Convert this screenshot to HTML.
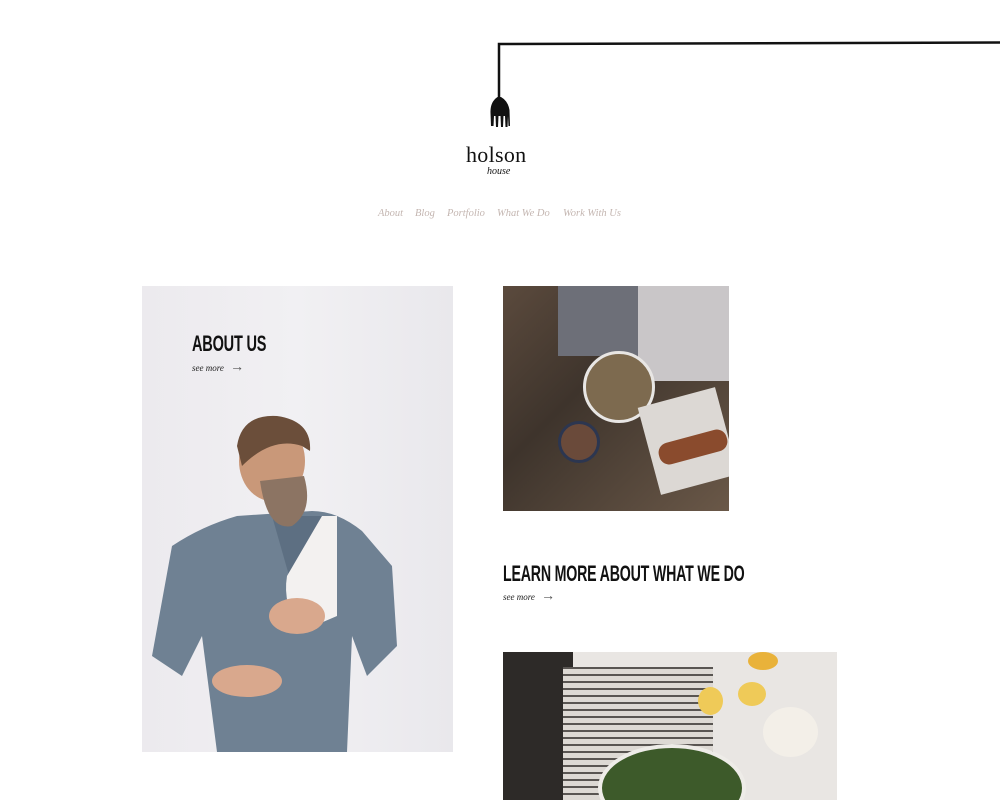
<!DOCTYPE html>
<html><head><style>
body{margin:0;width:1000px;height:800px;background:#fff;overflow:hidden;position:relative;font-family:"Liberation Serif",serif}
.a{position:absolute}
.h{font-family:"Liberation Sans",sans-serif;font-weight:bold;color:#111;font-size:22px;letter-spacing:-0.3px;white-space:nowrap;transform-origin:left top;transform:scaleX(0.66)}
.sm{font-style:italic;font-size:9px;color:#222}
.nav{font-style:italic;font-size:10.5px;color:#c4b6b1}
</style></head><body>
<svg class="a" style="left:0;top:0" width="1000" height="140">
<path d="M499 100 L499 44 L1000 42.5" stroke="#111" stroke-width="2.5" fill="none"/>
<path d="M497.5 97 Q490 102 490.5 113 L491 126 L493.5 126 L494 116 L495.5 116 L496 127 L498 127 L498.5 116 L500.5 116 L501 127 L503 127 L503.5 116 L505 116 L505.5 127 L507.5 127 L508 116 L508.5 126 L510 126 L509.5 110 Q508 101 501 97 Z" fill="#111"/>
</svg>
<div class="a" style="left:466px;top:142px;font-size:22px;color:#111;letter-spacing:0.3px">holson</div>
<div class="a" style="left:487px;top:166px;font-size:10px;font-style:italic;color:#111">house</div>
<div class="a nav" style="left:378px;top:208px">About</div>
<div class="a nav" style="left:415px;top:208px">Blog</div>
<div class="a nav" style="left:447px;top:208px">Portfolio</div>
<div class="a nav" style="left:497px;top:208px">What We Do</div>
<div class="a nav" style="left:563px;top:208px">Work With Us</div>

<div class="a" style="left:142px;top:286px;width:311px;height:466px;background:linear-gradient(90deg,#eceaee,#f1f0f3 50%,#e9e8ec);overflow:hidden">
 <svg width="311" height="466">
  <path d="M95 230 Q60 240 30 260 L10 370 L40 390 L60 350 L75 466 L205 466 L210 350 L225 390 L255 360 L250 280 L220 245 Q195 225 170 225 Z" fill="#6f8193"/>
  <path d="M130 230 L150 300 L180 230 Z" fill="#5d6f82"/>
  <path d="M145 290 Q140 320 160 345 L195 330 L195 230 L180 230 Z" fill="#f3f1f0"/>
  <ellipse cx="130" cy="175" rx="33" ry="40" fill="#c99879"/>
  <path d="M95 160 Q100 128 135 130 Q170 135 168 165 L160 160 Q130 150 100 180 Z" fill="#6b4e3a"/>
  <path d="M118 195 Q125 245 150 240 Q172 225 162 190 Z" fill="#8c7463"/>
  <ellipse cx="155" cy="330" rx="28" ry="18" fill="#d9a88d"/>
  <ellipse cx="105" cy="395" rx="35" ry="16" fill="#d9a88d"/>
 </svg>
</div>
<div class="a h" style="left:192px;top:331px">ABOUT US</div>
<div class="a sm" style="left:192px;top:360px">see more <span style="font-style:normal;font-size:14px;color:#555;margin-left:4px">→</span></div>

<div class="a" style="left:503px;top:286px;width:226px;height:225px;background:linear-gradient(135deg,#5b4a3d,#3e342c 40%,#6a5848);overflow:hidden">
 <div class="a" style="left:55px;top:0;width:80px;height:70px;background:#6d6f78"></div>
 <div class="a" style="left:135px;top:0;width:91px;height:95px;background:#c9c6c8"></div>
 <div class="a" style="left:80px;top:65px;width:66px;height:66px;border-radius:50%;background:#7d6a4f;border:3px solid #e8e6e4"></div>
 <div class="a" style="left:55px;top:135px;width:36px;height:36px;border-radius:50%;background:#6a4a3a;border:3px solid #2c3650"></div>
 <div class="a" style="left:145px;top:110px;width:80px;height:90px;background:#dcd8d4;transform:rotate(-15deg)"></div>
 <div class="a" style="left:155px;top:150px;width:70px;height:22px;background:#8a4b2d;border-radius:10px;transform:rotate(-15deg)"></div>
</div>
<div class="a h" style="left:503px;top:561px;transform:scaleX(0.645)">LEARN MORE ABOUT WHAT WE DO</div>
<div class="a sm" style="left:503px;top:589px">see more <span style="font-style:normal;font-size:14px;color:#555;margin-left:4px">→</span></div>

<div class="a" style="left:503px;top:652px;width:334px;height:148px;background:#e9e6e3;overflow:hidden">
 <div class="a" style="left:0;top:0;width:70px;height:148px;background:#2d2a28"></div>
 <div class="a" style="left:60px;top:15px;width:150px;height:133px;background:repeating-linear-gradient(0deg,#ddd9d4 0 5px,#595552 5px 7px)"></div>
 <div class="a" style="left:95px;top:92px;width:140px;height:80px;border-radius:50%;background:#3d5a2a;border:4px solid #eeece8"></div>
 <div class="a" style="left:260px;top:55px;width:55px;height:50px;border-radius:50%;background:#f3efe8"></div>
 <div class="a" style="left:245px;top:0;width:30px;height:18px;border-radius:50%;background:#e9b23a"></div>
 <div class="a" style="left:235px;top:30px;width:28px;height:24px;border-radius:50%;background:#efca58"></div>
 <div class="a" style="left:195px;top:35px;width:25px;height:28px;border-radius:50%;background:#efca58"></div>
</div>
</body></html>
